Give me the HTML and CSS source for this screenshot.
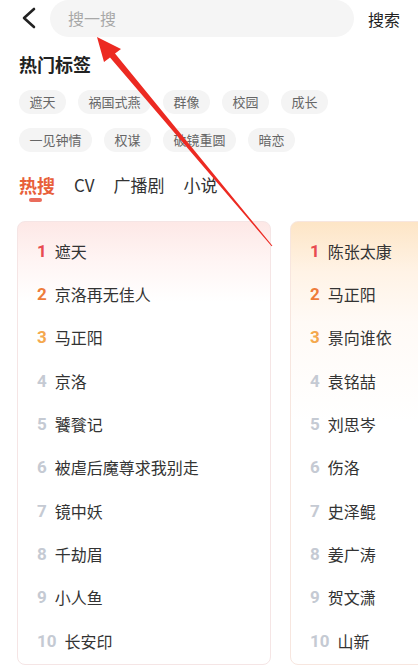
FILE: index.html
```html
<!DOCTYPE html>
<html lang="zh">
<head>
<meta charset="utf-8">
<title>搜索</title>
<link rel="stylesheet" href="styles.css">
</head>
<body>
<div class="page">
  <header class="topbar">
    <span class="back">
      <svg width="16" height="24" viewBox="0 0 16 24"><path d="M13 3 L3 12 L13 21" fill="none" stroke="#222" stroke-width="2.6" stroke-linecap="round" stroke-linejoin="round"/></svg>
    </span>
    <div class="search-box">搜一搜</div>
    <span class="search-btn">搜索</span>
  </header>

  <section class="hot-tags">
    <h2 class="title">热门标签</h2>
    <div class="tags">
      <span class="tag">遮天</span>
      <span class="tag">祸国式燕</span>
      <span class="tag">群像</span>
      <span class="tag">校园</span>
      <span class="tag">成长</span>
      <span class="tag">一见钟情</span>
      <span class="tag">权谋</span>
      <span class="tag">破镜重圆</span>
      <span class="tag">暗恋</span>
    </div>
  </section>

  <nav class="tabs">
    <span class="tab active">热搜</span>
    <span class="tab">CV</span>
    <span class="tab">广播剧</span>
    <span class="tab">小说</span>
  </nav>

  <div class="boards">
    <div class="card card-red">
      <div class="row"><span class="num n1">1</span><span class="name">遮天</span></div>
      <div class="row"><span class="num n2">2</span><span class="name">京洛再无佳人</span></div>
      <div class="row"><span class="num n3">3</span><span class="name">马正阳</span></div>
      <div class="row"><span class="num">4</span><span class="name">京洛</span></div>
      <div class="row"><span class="num">5</span><span class="name">饕餮记</span></div>
      <div class="row"><span class="num">6</span><span class="name">被虐后魔尊求我别走</span></div>
      <div class="row"><span class="num">7</span><span class="name">镜中妖</span></div>
      <div class="row"><span class="num">8</span><span class="name">千劫眉</span></div>
      <div class="row"><span class="num">9</span><span class="name">小人鱼</span></div>
      <div class="row"><span class="num">10</span><span class="name">长安印</span></div>
    </div>
    <div class="card card-orange">
      <div class="row"><span class="num n1">1</span><span class="name">陈张太康</span></div>
      <div class="row"><span class="num n2">2</span><span class="name">马正阳</span></div>
      <div class="row"><span class="num n3">3</span><span class="name">景向谁依</span></div>
      <div class="row"><span class="num">4</span><span class="name">袁铭喆</span></div>
      <div class="row"><span class="num">5</span><span class="name">刘思岑</span></div>
      <div class="row"><span class="num">6</span><span class="name">伤洛</span></div>
      <div class="row"><span class="num">7</span><span class="name">史泽鲲</span></div>
      <div class="row"><span class="num">8</span><span class="name">姜广涛</span></div>
      <div class="row"><span class="num">9</span><span class="name">贺文潇</span></div>
      <div class="row"><span class="num">10</span><span class="name">山新</span></div>
    </div>
  </div>

  <svg class="arrow" width="418" height="672" viewBox="0 0 418 672">
    <polygon points="97,37 121,49 115,53.5 272.4,245.7 271.6,246.3 110,57.5 104,62" fill="#ec2a22"/>
  </svg>
</div>
</body>
</html>
```

FILE: styles.css
```css
* { box-sizing: border-box; margin: 0; padding: 0; }
html, body { background: #fff; }
body {
  font-family: "Noto Sans CJK SC", "Noto Sans", sans-serif;
  color: #222;
  width: 418px;
  height: 672px;
  overflow: hidden;
}
.page { position: relative; width: 418px; height: 672px; overflow: hidden; }

.topbar {
  display: flex;
  align-items: center;
  height: 37px;
  padding-left: 21px;
}
.back { display: flex; width: 16px; height: 24px; margin-top: -1px; }
.search-box {
  width: 304px;
  height: 37px;
  margin-left: 13px;
  border-radius: 19px;
  background: #f5f5f5;
  color: #a8a8a8;
  font-size: 16px;
  line-height: 37px;
  padding-left: 18px;
}
.search-btn {
  margin-left: 14px;
  font-size: 16px;
  color: #222;
}

.hot-tags { padding: 0 19px; }
.title {
  margin-top: 14px;
  font-size: 18px;
  line-height: 26px;
  font-weight: 700;
  color: #222;
}
.tags {
  display: flex;
  flex-wrap: wrap;
  column-gap: 12px;
  row-gap: 14px;
  margin-top: 13px;
  width: 320px;
}
.tag {
  height: 24px;
  line-height: 24px;
  padding: 0 10.5px;
  border-radius: 12px;
  background: #f4f4f4;
  color: #666;
  font-size: 13px;
}

.tabs {
  display: flex;
  gap: 19px;
  padding-left: 19px;
  margin-top: 21px;
}
.tab {
  position: relative;
  font-size: 17px;
  line-height: 24px;
  color: #333;
}
.tab.active {
  font-size: 18px;
  font-weight: 700;
  color: #e8603a;
  padding-bottom: 5px;
}
.tab.active::after {
  content: "";
  position: absolute;
  left: 10px;
  bottom: 0;
  width: 13px;
  height: 4px;
  border-radius: 2px;
  background: #ea6c5c;
}

.boards {
  display: flex;
  gap: 19px;
  padding-left: 17px;
  margin-top: 19px;
}
.card {
  flex-shrink: 0;
  width: 254px;
  height: 444px;
  border-radius: 8px;
  border: 1px solid #f5e5e5;
  padding: 7px 0 3px 19px;
}
.card-red { background: linear-gradient(180deg, #fde8e6 0px, #fff5f4 40px, #ffffff 80px); }
.card-orange { background: linear-gradient(180deg, #fde5c6 0px, #fff3e6 50px, #fffaf6 100px, #ffffff 200px); border-color: #f7e6df; }

.row {
  display: flex;
  align-items: center;
  gap: 8px;
  height: 43.33px;
}
.num {
  font-family: Roboto, "Liberation Sans", sans-serif;
  font-weight: 700;
  font-size: 17px;
  color: #c5cad3;
}
.num.n1 { color: #e84b50; }
.num.n2 { color: #ee7c3a; }
.num.n3 { color: #f4a84e; }
.name {
  font-size: 16px;
  color: #333;
}

.arrow {
  position: absolute;
  left: 0;
  top: 0;
  pointer-events: none;
}
```
